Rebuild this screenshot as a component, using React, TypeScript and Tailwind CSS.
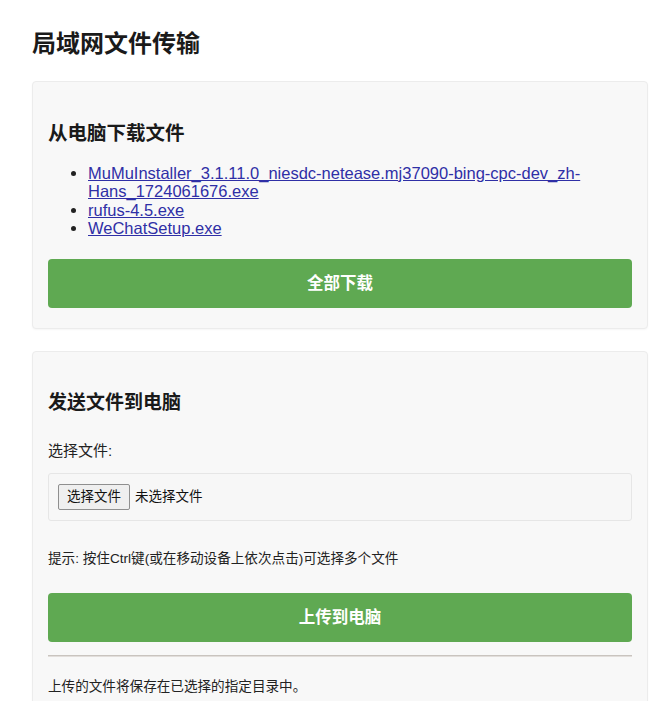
import React from "react";

const files = [
  "MuMuInstaller_3.1.11.0_niesdc-netease.mj37090-bing-cpc-dev_zh-Hans_1724061676.exe",
  "rufus-4.5.exe",
  "WeChatSetup.exe",
];

export default function App() {
  return (
    <div
      className="min-h-[701px] bg-white pl-8 pr-[18px] pt-[29px] text-[#222]"
      style={{ fontFamily: '"Liberation Sans", Arial, "Noto Sans CJK SC", sans-serif' }}
    >
      <h1 className="text-[24px] font-bold leading-[30px] text-[#1a1a1a]">局域网文件传输</h1>

      <div className="mt-[22px] rounded-[4px] border border-[#ececec] bg-[#f8f8f8] px-[15px] pt-[38px] pb-[20px] shadow-[0_1px_2px_rgba(0,0,0,0.04)]">
        <h2 className="text-[19.5px] font-bold leading-[26px] text-[#1a1a1a]">从电脑下载文件</h2>
        <ul className="mt-[18px] list-disc pl-10 text-[16.5px] leading-[18.4px]">
          {files.map((f) => (
            <li key={f} className="marker:text-[#222]">
              <a href="#" className="text-[#2f2fa6] underline">
                {f}
              </a>
            </li>
          ))}
        </ul>
        <button className="mt-[21px] flex h-[49px] w-full items-center justify-center rounded-[4px] bg-[#5fa952] text-[16.5px] font-bold text-white">
          全部下载
        </button>
      </div>

      <div className="mt-[22px] rounded-[4px] border border-[#ececec] bg-[#f8f8f8] px-[15px] pt-[38px] pb-[20px] shadow-[0_1px_2px_rgba(0,0,0,0.04)]">
        <h2 className="text-[19px] font-bold leading-[26px] text-[#1a1a1a]">发送文件到电脑</h2>
        <div className="mt-[25px] text-[15px] leading-[20px] text-[#222]">选择文件:</div>
        <div className="mt-[12px] flex h-[48px] items-center rounded-[3px] border border-[#e6e6e6] bg-[#f7f7f7] pl-[9px]">
          <span className="flex h-[26px] items-center rounded-[2px] border border-[#8f8f8f] bg-[#efefef] px-[8px] text-[13.5px] text-[#111]">
            选择文件
          </span>
          <span className="ml-[5px] text-[13.5px] text-[#111]">未选择文件</span>
        </div>
        <p className="mt-[29px] text-[13.6px] leading-[18px] text-[#222]">
          提示: 按住Ctrl键(或在移动设备上依次点击)可选择多个文件
        </p>
        <button className="mt-[25px] flex h-[49px] w-full items-center justify-center rounded-[4px] bg-[#5fa952] text-[16.5px] font-bold text-white">
          上传到电脑
        </button>
        <div className="mt-[13px] h-[2px] w-full border-t border-[#c9c4bf] bg-[#e2dedb]" />
        <p className="mt-[21px] text-[13.6px] leading-[18px] text-[#222]">上传的文件将保存在已选择的指定目录中。</p>
      </div>
    </div>
  );
}
